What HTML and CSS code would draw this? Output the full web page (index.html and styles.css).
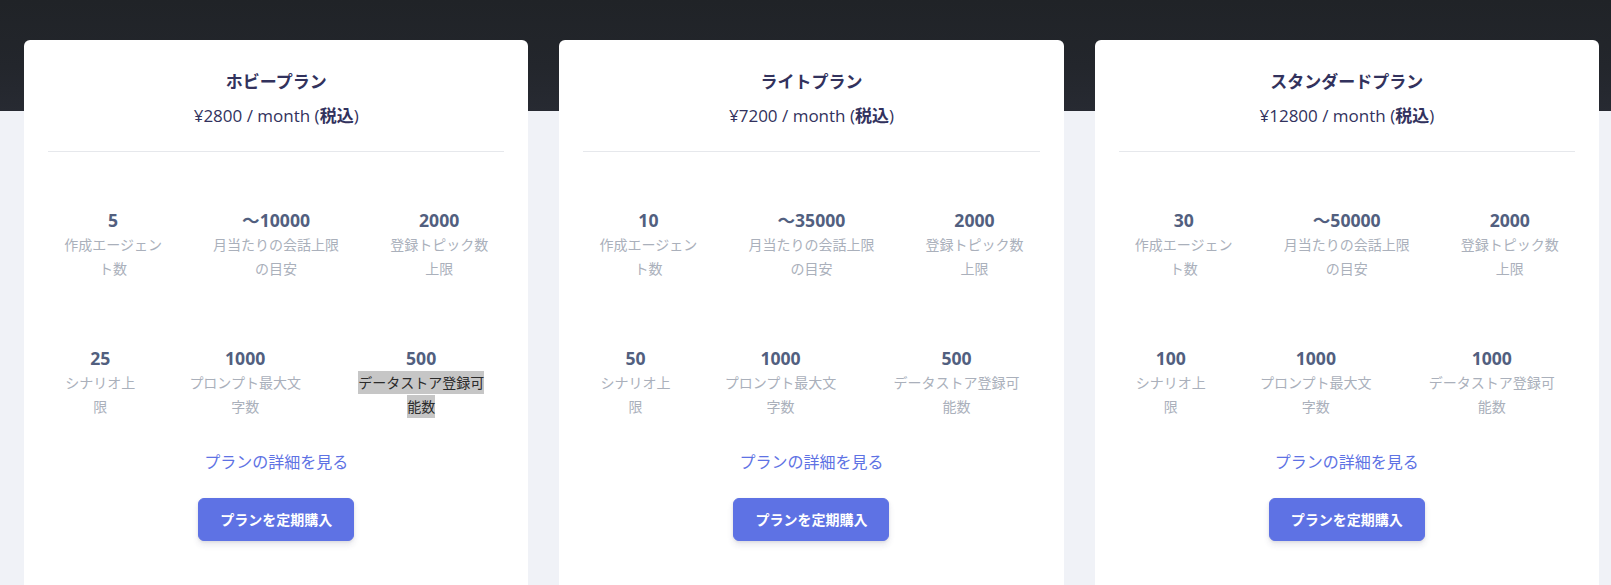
FILE: index.html
```html
<!DOCTYPE html>
<html lang="ja">
<head>
<meta charset="utf-8">
<title>プラン</title>
<link rel="stylesheet" href="styles.css">
</head>
<body>
<div class="hero"></div>
<main class="plans">
  <section class="card">
    <h3 class="plan-name">ホビープラン</h3>
    <p class="plan-price">¥2800 / month (<span class="tax">税込</span>)</p>
    <hr class="divider">
    <div class="stats">
      <div class="stat"><div class="num">5</div><div class="label">作成エージェント数</div></div>
      <div class="stat"><div class="num">〜10000</div><div class="label">月当たりの会話上限の目安</div></div>
      <div class="stat"><div class="num">2000</div><div class="label">登録トピック数上限</div></div>
    </div>
    <div class="stats stats-second">
      <div class="stat"><div class="num">25</div><div class="label">シナリオ上限</div></div>
      <div class="stat"><div class="num">1000</div><div class="label">プロンプト最大文字数</div></div>
      <div class="stat"><div class="num">500</div><div class="label"><span class="selected">データストア登録可能数</span></div></div>
    </div>
    <a class="detail-link" href="#">プランの詳細を見る</a>
    <div class="actions"><button class="btn-primary" type="button">プランを定期購入</button></div>
  </section>
  <section class="card">
    <h3 class="plan-name">ライトプラン</h3>
    <p class="plan-price">¥7200 / month (<span class="tax">税込</span>)</p>
    <hr class="divider">
    <div class="stats">
      <div class="stat"><div class="num">10</div><div class="label">作成エージェント数</div></div>
      <div class="stat"><div class="num">〜35000</div><div class="label">月当たりの会話上限の目安</div></div>
      <div class="stat"><div class="num">2000</div><div class="label">登録トピック数上限</div></div>
    </div>
    <div class="stats stats-second">
      <div class="stat"><div class="num">50</div><div class="label">シナリオ上限</div></div>
      <div class="stat"><div class="num">1000</div><div class="label">プロンプト最大文字数</div></div>
      <div class="stat"><div class="num">500</div><div class="label">データストア登録可能数</div></div>
    </div>
    <a class="detail-link" href="#">プランの詳細を見る</a>
    <div class="actions"><button class="btn-primary" type="button">プランを定期購入</button></div>
  </section>
  <section class="card">
    <h3 class="plan-name">スタンダードプラン</h3>
    <p class="plan-price">¥12800 / month (<span class="tax">税込</span>)</p>
    <hr class="divider">
    <div class="stats">
      <div class="stat"><div class="num">30</div><div class="label">作成エージェント数</div></div>
      <div class="stat"><div class="num">〜50000</div><div class="label">月当たりの会話上限の目安</div></div>
      <div class="stat"><div class="num">2000</div><div class="label">登録トピック数上限</div></div>
    </div>
    <div class="stats stats-second">
      <div class="stat"><div class="num">100</div><div class="label">シナリオ上限</div></div>
      <div class="stat"><div class="num">1000</div><div class="label">プロンプト最大文字数</div></div>
      <div class="stat"><div class="num">1000</div><div class="label">データストア登録可能数</div></div>
    </div>
    <a class="detail-link" href="#">プランの詳細を見る</a>
    <div class="actions"><button class="btn-primary" type="button">プランを定期購入</button></div>
  </section>
</main>
</body>
</html>
```

FILE: styles.css
```css
html, body {
  margin: 0;
  padding: 0;
}
body {
  background: #f0f2f7;
  font-family: "Open Sans", "Noto Sans CJK JP", sans-serif;
  color: #525f7f;
  overflow: hidden;
  height: 585px;
}
.hero {
  height: 111px;
  background: linear-gradient(180deg, #202327 0%, #23262c 60%, #272a32 100%);
}
.plans {
  display: grid;
  grid-template-columns: repeat(3, 1fr);
  gap: 31px;
  padding: 0 12px 0 24px;
  margin-top: -71px;
}
.card {
  background: #fff;
  border-radius: 6px;
  padding: 29px 24px 0;
  min-height: 620px;
  box-sizing: border-box;
  text-align: center;
}
.plan-name {
  margin: 0;
  font-size: 17px;
  line-height: 25px;
  font-weight: 600;
  color: #32325d;
}
.plan-price {
  margin: 9px 0 0;
  font-size: 17px;
  line-height: 25px;
  font-weight: 400;
  color: #32325d;
}
.tax {
  font-weight: 600;
}
.divider {
  margin: 23px 0 0;
  border: 0;
  border-top: 1px solid #e6e8ec;
  height: 0;
}
.stats {
  display: flex;
  gap: 16px;
  margin-top: 55px;
}
.stats-second {
  margin-top: 64px;
}
.stat {
  flex: 0 1 auto;
  padding: 0 15px;
  text-align: center;
}
.num {
  font-size: 17.6px;
  line-height: 26px;
  font-weight: 700;
  color: #525f7f;
}
.label {
  font-size: 14px;
  line-height: 24px;
  font-weight: 400;
  color: #aab0bb;
}
.selected {
  background: #c6c6c6;
  color: #2b2b2b;
  padding: 2px 0;
}
.detail-link {
  display: block;
  margin-top: 31px;
  font-size: 16px;
  line-height: 24px;
  color: #5e72e4;
  text-decoration: none;
}
.actions {
  margin-top: 24px;
  display: flex;
  justify-content: center;
}
.btn-primary {
  font-family: "Open Sans", "Noto Sans CJK JP", sans-serif;
  font-size: 14px;
  font-weight: 700;
  line-height: 21px;
  color: #fff;
  background: #5e72e4;
  border: 1px solid #5e72e4;
  border-radius: 6px;
  padding: 10px 21px;
  box-shadow: 0 4px 6px rgba(50, 50, 93, 0.11), 0 1px 3px rgba(0, 0, 0, 0.08);
  cursor: pointer;
}
```
